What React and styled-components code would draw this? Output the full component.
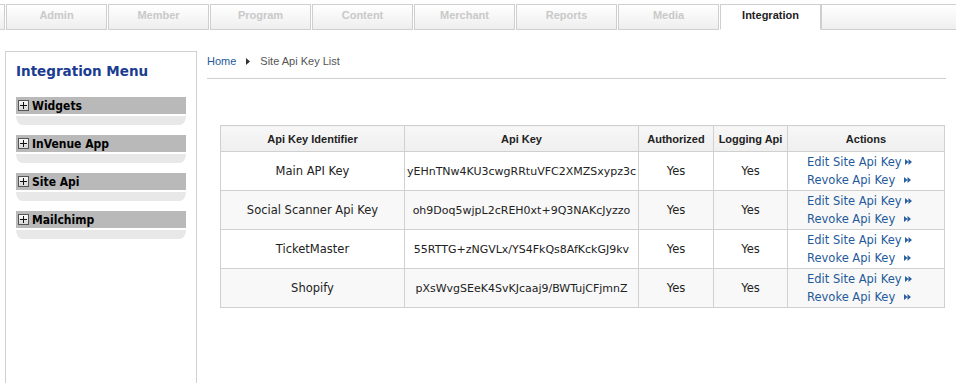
import React from 'react';
import styled, { createGlobalStyle } from 'styled-components';

const GlobalStyle = createGlobalStyle`
  body {
    margin: 0;
    background: #fff;
    font-family: "Liberation Sans", Arial, sans-serif;
  }
`

const Page = styled.div`
  width: 956px;
  height: 383px;
  overflow: hidden;
`

const TabBar = styled.div`
  display: flex;
  margin-top: 4px;
  height: 26px;
`

const TabEdge = styled.div`
  width: 4px;
  border-top: 1px solid #cfcfcf;
  border-bottom: 1px solid #cfcfcf;
  border-right: 1px solid #cfcfcf;
  background: linear-gradient(#fff, #efefef);
`

const Tab = styled.div`
  width: 101px;
  display: flex;
  justify-content: center;
  padding-top: 4px;
  box-sizing: border-box;
  border-top: 1px solid #cfcfcf;
  border-left: 1px solid #cfcfcf;
  border-right: 1px solid #cfcfcf;
  border-bottom: 1px solid ${p => (p.$active ? 'transparent' : '#cfcfcf')};
  margin-left: 1px;
  background: ${p => (p.$active ? '#fff' : 'linear-gradient(#ffffff, #eeeeee)')};
  color: ${p => (p.$active ? '#222' : '#c9c9c9')};
  font-size: 11px;
  font-weight: bold;
`

const TabFill = styled.div`
  flex: 1;
  border-top: 1px solid #cfcfcf;
  border-bottom: 1px solid #cfcfcf;
  border-left: 1px solid #cfcfcf;
  background: linear-gradient(#fff, #efefef);
`

const Body = styled.div`
  display: flex;
  padding-top: 21px;
`

const Sidebar = styled.div`
  margin-left: 5px;
  width: 192px;
  height: 340px;
  border: 1px solid #d0d0d0;
  border-bottom: none;
  padding: 10px 10px 0 10px;
  box-sizing: border-box;
`

const MenuTitle = styled.div`
  font-family: Verdana, "DejaVu Sans", sans-serif;
  font-size: 13.5px;
  font-weight: bold;
  color: #1b3c90;
  height: 20px;
  margin-top: 1px;
  margin-bottom: 14px;
`

const MenuGroup = styled.div`
  margin-bottom: 10px;
`

const MenuHead = styled.div`
  display: flex;
  align-items: center;
  gap: 3px;
  height: 17px;
  background: #b9b9b9;
  padding-left: 2px;
  font-family: "DejaVu Sans Condensed", Tahoma, "DejaVu Sans", sans-serif;
  font-size: 12px;
  font-weight: bold;
  color: #000;
`

const PlusBox = styled.span`
  width: 9px;
  height: 9px;
  border: 1px solid #555;
  background: linear-gradient(#fafafa, #d8d8d8);
  position: relative;
  flex: none;

  &::before, &::after {
    content: '';
    position: absolute;
    background: #111;
  }
  &::before { left: 1px; right: 1px; top: 4px; height: 1px; }
  &::after { top: 1px; bottom: 1px; left: 4px; width: 1px; }
`

const MenuFoot = styled.div`
  margin-top: 2px;
  height: 9px;
  background: #e8e8e8;
  border-radius: 0 0 6px 6px / 0 0 9px 9px;
`

const Main = styled.div`
  margin-left: 10px;
  width: 739px;
`

const Crumbs = styled.div`
  display: flex;
  align-items: center;
  gap: 10px;
  height: 20px;
  font-size: 11px;
  padding-bottom: 7px;
  border-bottom: 1px solid #cfcfcf;
`

const CrumbLink = styled.span`
  color: #1f5a9a;
`

const CrumbText = styled.span`
  color: #555;
`

const Table = styled.table`
  margin: 46px 0 0 13px;
  width: 725px;
  border-collapse: collapse;
  table-layout: fixed;
  border: 1px solid #d0d0d0;
`

const Th = styled.th`
  height: 25px;
  padding: 0;
  border: 1px solid #d0d0d0;
  background: linear-gradient(#f7f7f7, #efefef);
  font-size: 11px;
  font-weight: bold;
  color: #222;
  text-align: center;
`

const Row = styled.tr`
  background: ${p => (p.$alt ? '#f8f8f8' : '#fff')};
`

const Td = styled.td`
  height: 38px;
  padding: 0 2px;
  border: 1px solid #d0d0d0;
  font-family: Verdana, "DejaVu Sans", sans-serif;
  font-size: 11.5px;
  color: #222;
  text-align: center;
  white-space: nowrap;
  overflow: hidden;
`

const KeyCell = styled(Td)`
  font-size: 11px;
  padding: 0 1px;
`

const ActionCell = styled(Td)`
  text-align: left;
  padding-left: 19px;
`

const ActionLink = styled.div`
  display: flex;
  align-items: center;
  gap: ${p => p.$gap}px;
  color: #1f5a9a;
  line-height: 18px;
`

const Arrows = () => (
  <svg width="7" height="6" viewBox="0 0 7 6">
    <path d="M0 0 L3.5 3 L0 6 Z M3.5 0 L7 3 L3.5 6 Z" fill="#2a5fa0" />
  </svg>
)

const menu = ['Widgets', 'InVenue App', 'Site Api', 'Mailchimp']
const tabs = ['Admin', 'Member', 'Program', 'Content', 'Merchant', 'Reports', 'Media', 'Integration']
const keys = [
  ['Main API Key', 'yEHnTNw4KU3cwgRRtuVFC2XMZSxypz3c'],
  ['Social Scanner Api Key', 'oh9Doq5wjpL2cREH0xt+9Q3NAKcJyzzo'],
  ['TicketMaster', '55RTTG+zNGVLx/YS4FkQs8AfKckGJ9kv'],
  ['Shopify', 'pXsWvgSEeK4SvKJcaaj9/BWTujCFjmnZ'],
]

export default function App() {
  return (
    <Page>
      <GlobalStyle />
      <TabBar>
        <TabEdge />
        {tabs.map(t => (
          <Tab key={t} $active={t === 'Integration'}>{t}</Tab>
        ))}
        <TabFill />
      </TabBar>
      <Body>
        <Sidebar>
          <MenuTitle>Integration Menu</MenuTitle>
          {menu.map(m => (
            <MenuGroup key={m}>
              <MenuHead><PlusBox />{m}</MenuHead>
              <MenuFoot />
            </MenuGroup>
          ))}
        </Sidebar>
        <Main>
          <Crumbs>
            <CrumbLink>Home</CrumbLink>
            <svg width="4" height="7" viewBox="0 0 4 7"><path d="M0 0 L4 3.5 L0 7 Z" fill="#333" /></svg>
            <CrumbText>Site Api Key List</CrumbText>
          </Crumbs>
          <Table>
            <colgroup>
              <col style={{ width: 184 }} />
              <col style={{ width: 234 }} />
              <col style={{ width: 75 }} />
              <col style={{ width: 74 }} />
              <col style={{ width: 157 }} />
            </colgroup>
            <thead>
              <tr>
                <Th>Api Key Identifier</Th>
                <Th>Api Key</Th>
                <Th>Authorized</Th>
                <Th>Logging Api</Th>
                <Th>Actions</Th>
              </tr>
            </thead>
            <tbody>
              {keys.map(([name, key], i) => (
                <Row key={name} $alt={i % 2 === 1}>
                  <Td>{name}</Td>
                  <KeyCell>{key}</KeyCell>
                  <Td>Yes</Td>
                  <Td>Yes</Td>
                  <ActionCell>
                    <ActionLink $gap={3}>Edit Site Api Key <Arrows /></ActionLink>
                    <ActionLink $gap={9}>Revoke Api Key <Arrows /></ActionLink>
                  </ActionCell>
                </Row>
              ))}
            </tbody>
          </Table>
        </Main>
      </Body>
    </Page>
  );
}
